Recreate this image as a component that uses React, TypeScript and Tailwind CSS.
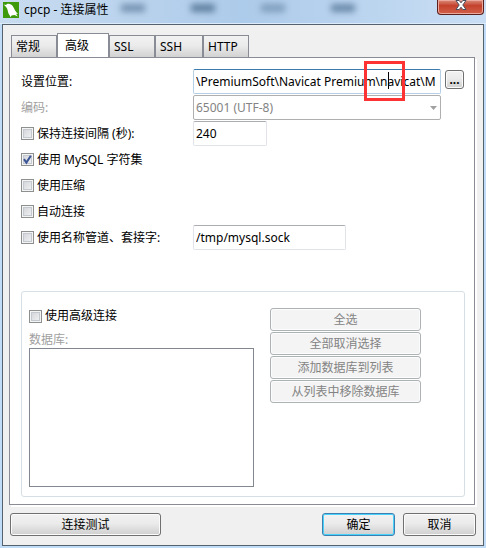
import { useState } from "react";
import type { ReactNode } from "react";

const FIELD =
  "h-[25px] rounded-[2px] border border-[#e2e3ea] border-t-[#abadb3] bg-white pl-[2px] outline-none";
const GLOSSY =
  "rounded-[3px] border border-[#707070] bg-linear-to-b from-[#f2f2f2] from-0% via-[#ebebeb] via-45% to-[#cfcfcf] shadow-[inset_0_0_0_1px_#fbfbfb]";
const TABS = [
  { id: "general", label: "常规", width: "w-[46px]" },
  { id: "advanced", label: "高级", width: "w-[52px]" },
  { id: "ssl", label: "SSL", width: "w-[46px]" },
  { id: "ssh", label: "SSH", width: "w-[48px]" },
  { id: "http", label: "HTTP", width: "w-[46px]" },
];

function Check({ children, defaultChecked = false }: { children: ReactNode; defaultChecked?: boolean }) {
  return (
    <label className="flex items-center gap-[3px]">
      <span className="relative flex size-[13px] shrink-0">
        <input
          type="checkbox"
          defaultChecked={defaultChecked}
          className="peer size-[13px] appearance-none border border-[#8e8f8f] bg-linear-to-br from-[#cdd0d6] to-[#f6f6f6] shadow-[inset_0_0_0_1px_#f4f4f4,inset_0_0_0_2px_#c4c8cf]"
        />
        <svg
          viewBox="0 0 13 13"
          className="pointer-events-none absolute inset-0 hidden size-[13px] peer-checked:block"
        >
          <path d="M3 6.2 L5.4 9.6 L9.8 2.8" fill="none" stroke="#3b5596" strokeWidth="2" />
        </svg>
      </span>
      <span>{children}</span>
    </label>
  );
}

function TitleBar() {
  return (
    <header className="relative flex h-6 items-start justify-between overflow-hidden border-b border-[#dcecfb] bg-linear-to-r from-[#c9dcf0] via-[#adcbea] via-50% to-[#c9def4] pr-[2px] pl-[3px]">
      <div className="absolute inset-x-0 top-1 flex gap-[46px] pl-[121px] blur-[3px]">
        <i className="h-2 w-6 bg-[#7593b2]" />
        <i className="h-2 w-6 bg-[#5f7f9f]" />
        <i className="h-2 w-6 bg-[#7f9dbc]" />
        <i className="h-2 w-6 bg-[#6a89a9]" />
      </div>
      <div className="relative flex items-center gap-[5px] pt-px">
        <svg viewBox="0 0 16 16" className="size-4">
          <rect width="16" height="16" fill="#3f9a0b" />
          <path
            d="M.6 2.6 L3 3 L4 2 C6 1.2 8.5 2 10 4.5 C11.5 7 12.5 10 15 12 L13 11.8 L14.8 14.6 L11.5 13 L8.5 13.6 L7.4 15.2 L6.8 13.4 C5.4 12 5 10 4.6 8 C4 5.4 2.4 4.4 .6 2.6 Z"
            fill="#fff"
          />
        </svg>
        <h1 className="leading-[18px]">cpcp - 连接属性</h1>
      </div>
      <button
        aria-label="关闭"
        className="relative flex h-[15px] w-[47px] items-center justify-center rounded-b-[4px] border border-t-0 border-[#5b1f1c] bg-linear-to-b from-[#d98c7c] via-[#c4412c] via-40% to-[#d2604a] pb-[5px] shadow-[inset_0_0_0_1px_#eaa99c]"
      >
        <svg viewBox="0 0 12 10" className="h-[10px] w-3">
          <path
            d="M1 .5H4.2L6 2.8L7.8 .5H11L7.8 5L11 9.5H7.8L6 7.2L4.2 9.5H1L4.2 5Z"
            fill="#fff"
            stroke="#4a4f5e"
            strokeWidth="1"
          />
        </svg>
      </button>
    </header>
  );
}

export default function App() {
  const [tab, setTab] = useState("advanced");
  const [path, setPath] = useState("\\PremiumSoft\\Navicat Premium\\navicat\\M");

  return (
    <div className="bg-[#c1dcf6] font-['Noto_Sans','Noto_Sans_CJK_SC',sans-serif] text-[12px] leading-4 text-black">
      <TitleBar />
      <div className="px-[2px] pb-[2px]">
        <main className="border border-[#56616e] bg-[#f0f0f0] pt-2 pr-[7px] pb-[9px] pl-[6px]">
          <div role="tablist" className="flex h-6 items-end pl-[2px]">
            {TABS.map((t) => (
              <button
                key={t.id}
                role="tab"
                aria-selected={t.id === tab}
                onClick={() => setTab(t.id)}
                className={`${t.width} border border-b-0 border-[#898c95] text-left ${
                  t.id === tab
                    ? "h-6 bg-white pl-[7px]"
                    : "h-[22px] bg-linear-to-b from-[#f2f2f2] via-[#ebebeb] via-45% to-[#d2d2d2] pl-1"
                }`}
              >
                {t.label}
              </button>
            ))}
          </div>

          <section className="mr-px border border-[#898c95] bg-white pt-[11px] pr-[9px] pb-[7px] pl-[11px] shadow-[2px_2px_0_#fff]">
            <div className="grid grid-cols-[172px_1fr] items-center gap-y-px pr-px">
              <label htmlFor="location">设置位置:</label>
              <div className="flex items-start gap-1">
                <div className="relative z-10 flex min-w-0 flex-1">
                  <input
                    id="location"
                    value={path}
                    onChange={(e) => setPath(e.target.value)}
                    className="h-[25px] w-full rounded-[2px] border border-[#b5cfe7] border-t-[#3d7bad] bg-white pl-[2px] outline-none"
                  />
                  <i className="absolute top-[3px] right-[52px] h-[17px] w-px bg-black" />
                  <div className="pointer-events-none absolute -top-2 right-[36px] h-10 w-[41px] border-3 border-[#fd3232]" />
                </div>
                <button
                  aria-label="浏览"
                  className={`${GLOSSY} mt-px flex h-[19px] w-[19px] items-center justify-center font-bold`}
                >
                  ...
                </button>
              </div>

              <label htmlFor="encoding" className="text-[#a0a0a0]">编码:</label>
              <div className="relative mr-[23px] flex">
                <select
                  id="encoding"
                  disabled
                  className="h-[25px] w-full appearance-none rounded-[2px] border border-[#afafaf] bg-white pl-[2px] text-[#838383] opacity-100"
                >
                  <option>65001 (UTF-8)</option>
                </select>
                <svg viewBox="0 0 7 4" className="pointer-events-none absolute top-[11px] right-1 h-1 w-[7px]">
                  <path d="M0 0H7L3.5 4Z" fill="#a0a0a0" />
                </svg>
              </div>

              <Check>保持连接间隔 (秒):</Check>
              <input aria-label="保持连接间隔 (秒)" defaultValue="240" className={`${FIELD} w-[74px]`} />

              <div className="col-span-2 flex h-[25px] items-center">
                <Check defaultChecked>使用 MySQL 字符集</Check>
              </div>
              <div className="col-span-2 flex h-[25px] items-center">
                <Check>使用压缩</Check>
              </div>
              <div className="col-span-2 flex h-[25px] items-center">
                <Check>自动连接</Check>
              </div>

              <Check>使用名称管道、套接字:</Check>
              <input aria-label="套接字" defaultValue="/tmp/mysql.sock" className={`${FIELD} w-[153px]`} />
            </div>

            <div className="mt-[41px] flex gap-4 rounded-[3px] border border-[#d5dfe5] pt-4 pr-[43px] pb-[9px] pl-[7px]">
              <div className="w-[225px]">
                <Check>使用高级连接</Check>
                <label htmlFor="databases" className="mt-2 block text-[#a0a0a0]">数据库:</label>
                <select
                  id="databases"
                  size={6}
                  disabled
                  className="block h-[139px] w-full appearance-none border border-[#828790] bg-white opacity-100"
                />
              </div>
              <div className="flex flex-1 flex-col gap-px">
                {["全选", "全部取消选择", "添加数据库到列表", "从列表中移除数据库"].map((text) => (
                  <button
                    key={text}
                    disabled
                    className="h-[23px] rounded-[3px] border border-[#adb2b5] bg-[#f4f4f4] text-[#838383] shadow-[inset_0_0_0_1px_#fcfcfc]"
                  >
                    {text}
                  </button>
                ))}
              </div>
            </div>
          </section>

          <footer className="mt-2 flex gap-2 pl-px">
            <button className={`${GLOSSY} mr-auto h-[23px] w-[151px]`}>连接测试</button>
            <button className="h-[23px] w-[73px] rounded-[3px] border border-[#3c7fb1] bg-linear-to-b from-[#f2f2f2] via-[#ebebeb] via-45% to-[#cfcfcf] shadow-[inset_0_0_0_1px_#48d2fa]">
              确定
            </button>
            <button className={`${GLOSSY} h-[23px] w-[73px]`}>取消</button>
          </footer>
        </main>
      </div>
    </div>
  );
}
